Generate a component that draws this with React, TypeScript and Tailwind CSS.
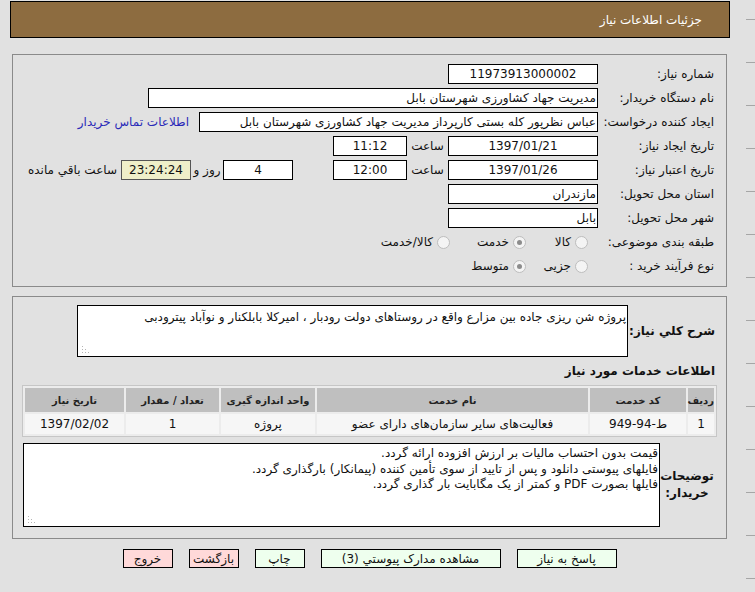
import React from 'react';

function Radio({ checked }: { checked?: boolean }) {
  return (
    <span className="w-[13px] h-[13px] rounded-full border border-[#bdbdbd] bg-[#f4f4f4] flex items-center justify-center shrink-0">
      {checked && <span className="w-[5px] h-[5px] rounded-full bg-[#8c8c8c]" />}
    </span>
  );
}

function Grip() {
  return (
    <svg className="absolute left-[3px] bottom-[3px]" width="8" height="8" viewBox="0 0 8 8">
      <rect x="1" y="1" width="1" height="1" fill="#b5b5b5" />
      <rect x="1" y="4" width="1" height="1" fill="#b5b5b5" />
      <rect x="4" y="4" width="1" height="1" fill="#b5b5b5" />
      <rect x="1" y="7" width="1" height="1" fill="#b5b5b5" />
      <rect x="4" y="7" width="1" height="1" fill="#b5b5b5" />
      <rect x="7" y="7" width="1" height="1" fill="#b5b5b5" />
    </svg>
  );
}

const label = 'w-[117px] shrink-0 text-right pr-[1px] whitespace-nowrap';
const box = 'h-[20px] border border-black bg-white flex items-center shrink-0 overflow-hidden whitespace-nowrap';

export default function App() {
  const ticks = Array.from({ length: 14 });

  return (
    <div className="w-[755px] h-[592px] bg-[#e1e1e1] flex overflow-hidden font-['DejaVu_Sans',sans-serif] text-[12px] text-[#111]">
      <div dir="rtl" className="ml-[10px] w-[720px] shrink-0 pt-[1px]">
        {/* title bar */}
        <div className="h-[37px] bg-[#8d6c40] border border-black flex items-center pr-[27px] text-white text-[12px]">
          جزئیات اطلاعات نیاز
        </div>

        {/* main info */}
        <div className="mt-[16px] mr-[3px] ml-[2px] border border-[#8a8a8a] pt-[7px] pb-[8px] pr-[11px]">
          <div className="h-[24px] flex items-center">
            <div className={label}>شماره نیاز:</div>
            <div className={`${box} w-[150px] justify-center`}>11973913000002</div>
          </div>
          <div className="h-[24px] flex items-center">
            <div className={label}>نام دستگاه خریدار:</div>
            <div className={`${box} w-[450px] pr-[1px]`}>مدیریت جهاد کشاورزی شهرستان بابل</div>
          </div>
          <div className="h-[24px] flex items-center">
            <div className={label}>ایجاد کننده درخواست:</div>
            <div className={`${box} w-[399px] pr-[1px]`}>عباس نظرپور کله بستی کارپرداز مدیریت جهاد کشاورزی شهرستان بابل</div>
            <span className="mr-[10px] text-[#2a2ab8] whitespace-nowrap">اطلاعات تماس خریدار</span>
          </div>
          <div className="h-[24px] flex items-center">
            <div className={label}>تاریخ ایجاد نیاز:</div>
            <div className={`${box} w-[150px] justify-center`}>1397/01/21</div>
            <div className="w-[41px] text-center">ساعت</div>
            <div className={`${box} w-[74px] justify-center`}>11:12</div>
          </div>
          <div className="h-[24px] flex items-center">
            <div className={label}>تاریخ اعتبار نیاز:</div>
            <div className={`${box} w-[150px] justify-center`}>1397/01/26</div>
            <div className="w-[41px] text-center">ساعت</div>
            <div className={`${box} w-[74px] justify-center`}>12:00</div>
            <div className={`${box} w-[70px] mr-[40px] justify-center`}>4</div>
            <div className="w-[32px] text-center whitespace-nowrap">روز و</div>
            <div className="h-[20px] w-[70px] border border-[#555] bg-[#efefc9] flex items-center justify-center">
              23:24:24
            </div>
            <span className="mr-[4px] whitespace-nowrap">ساعت باقي مانده</span>
          </div>
          <div className="h-[24px] flex items-center">
            <div className={label}>استان محل تحویل:</div>
            <div className={`${box} w-[150px] pr-[1px]`}>مازندران</div>
          </div>
          <div className="h-[24px] flex items-center">
            <div className={label}>شهر محل تحویل:</div>
            <div className={`${box} w-[150px] pr-[1px]`}>بابل</div>
          </div>
          <div className="h-[24px] flex items-center">
            <div className={label}>طبقه بندی موضوعی:</div>
            <div className="w-[62px] flex items-center gap-[4px] pr-[10px]">
              <Radio />
              <span>کالا</span>
            </div>
            <div className="w-[76px] flex items-center gap-[4px] pr-[10px]">
              <Radio checked />
              <span>خدمت</span>
            </div>
            <div className="flex items-center gap-[4px] pr-[10px]">
              <Radio />
              <span className="whitespace-nowrap">کالا/خدمت</span>
            </div>
          </div>
          <div className="h-[24px] flex items-center">
            <div className={label}>نوع فرآیند خرید :</div>
            <div className="w-[62px] flex items-center gap-[4px] pr-[10px]">
              <Radio />
              <span>جزیی</span>
            </div>
            <div className="flex items-center gap-[4px] pr-[10px]">
              <Radio checked />
              <span>متوسط</span>
            </div>
          </div>
        </div>

        {/* description and services */}
        <div className="mt-[9px] mr-[3px] ml-[2px] border border-[#8a8a8a] pt-[8px] pb-[11px]">
          <div className="flex items-center pr-[11px]">
            <div className="w-[87px] shrink-0 text-right font-bold text-[12px] whitespace-nowrap">شرح کلي نیاز:</div>
            <div className="relative w-[551px] shrink-0 h-[52px] border border-black bg-white pt-[3px] pr-[1px] leading-[16px]">
              پروژه شن ریزی جاده بین مزارع واقع در روستاهای دولت رودبار ، امیرکلا بابلکنار و نوآباد پیترودبی
              <Grip />
            </div>
          </div>

          <div className="mt-[5px] pr-[11px] h-[18px] flex items-center font-bold text-[12px]">
            اطلاعات خدمات مورد نیاز
          </div>

          <div className="mt-[5px] mx-[9px]">
            <table className="w-[695px] table-fixed border-separate border-spacing-[2px] border border-[#c6c6c6] bg-[#ececec]">
              <thead>
                <tr className="h-[24px] bg-[#bfbfbf] text-[10px] font-bold text-[#222]">
                  <th className="w-[26px] font-bold text-center">ردیف</th>
                  <th className="w-[96px] font-bold text-center">کد خدمت</th>
                  <th className="w-[271px] font-bold text-center">نام خدمت</th>
                  <th className="w-[94px] font-bold text-center">واحد اندازه گیری</th>
                  <th className="w-[93px] font-bold text-center">تعداد / مقدار</th>
                  <th className="w-[99px] font-bold text-center">تاریخ نیاز</th>
                </tr>
              </thead>
              <tbody>
                <tr className="h-[20px] bg-[#f6f6f6]">
                  <td className="text-center">1</td>
                  <td className="text-center">ط-94-949</td>
                  <td className="text-center">فعالیت‌های سایر سازمان‌های دارای عضو</td>
                  <td className="text-center">پروژه</td>
                  <td className="text-center">1</td>
                  <td className="text-center">1397/02/02</td>
                </tr>
              </tbody>
            </table>
          </div>

          <div className="mt-[6px] flex items-center">
            <div className="w-[66px] shrink-0 pr-[12px] text-center font-bold text-[12px] leading-[17px]">
              توضیحات خریدار:
            </div>
            <div className="relative w-[637px] shrink-0 h-[84px] border border-black bg-white pt-[2px] pr-[1px] leading-[15.5px] whitespace-nowrap">
              <div>قیمت بدون احتساب مالیات بر ارزش افزوده ارائه گردد.</div>
              <div>فایلهای پیوستی دانلود و پس از تایید از سوی تأمین کننده (پیمانکار) بارگذاری گردد.</div>
              <div>فایلها بصورت PDF و کمتر از یک مگابایت بار گذاری گردد.</div>
              <Grip />
            </div>
          </div>
        </div>

        {/* buttons */}
        <div className="mt-[10px] mr-[3px] ml-[2px] flex justify-center gap-[16px] text-[12px]">
          <button className="w-[100px] h-[19px] border border-black bg-[#eeffee] leading-none">پاسخ به نیاز</button>
          <button className="w-[180px] h-[19px] border border-black bg-[#eeffee] leading-none">مشاهده مدارک پیوستي (3)</button>
          <button className="w-[50px] h-[19px] border border-black bg-[#eeffee] leading-none">چاپ</button>
          <button className="w-[50px] h-[19px] border border-black bg-[#ffd9d9] leading-none whitespace-nowrap overflow-hidden">بازگشت</button>
          <button className="w-[50px] h-[19px] border border-black bg-[#ffd9d9] leading-none">خروج</button>
        </div>
      </div>

      {/* ruler ticks on the right edge */}
      <div className="ml-[16px] w-[9px] pt-[19px] flex flex-col gap-[42px]">
        {ticks.map((_, i) => (
          <div key={i} className="h-px w-[9px] bg-[#a6a6a6]" />
        ))}
      </div>
    </div>
  );
}
